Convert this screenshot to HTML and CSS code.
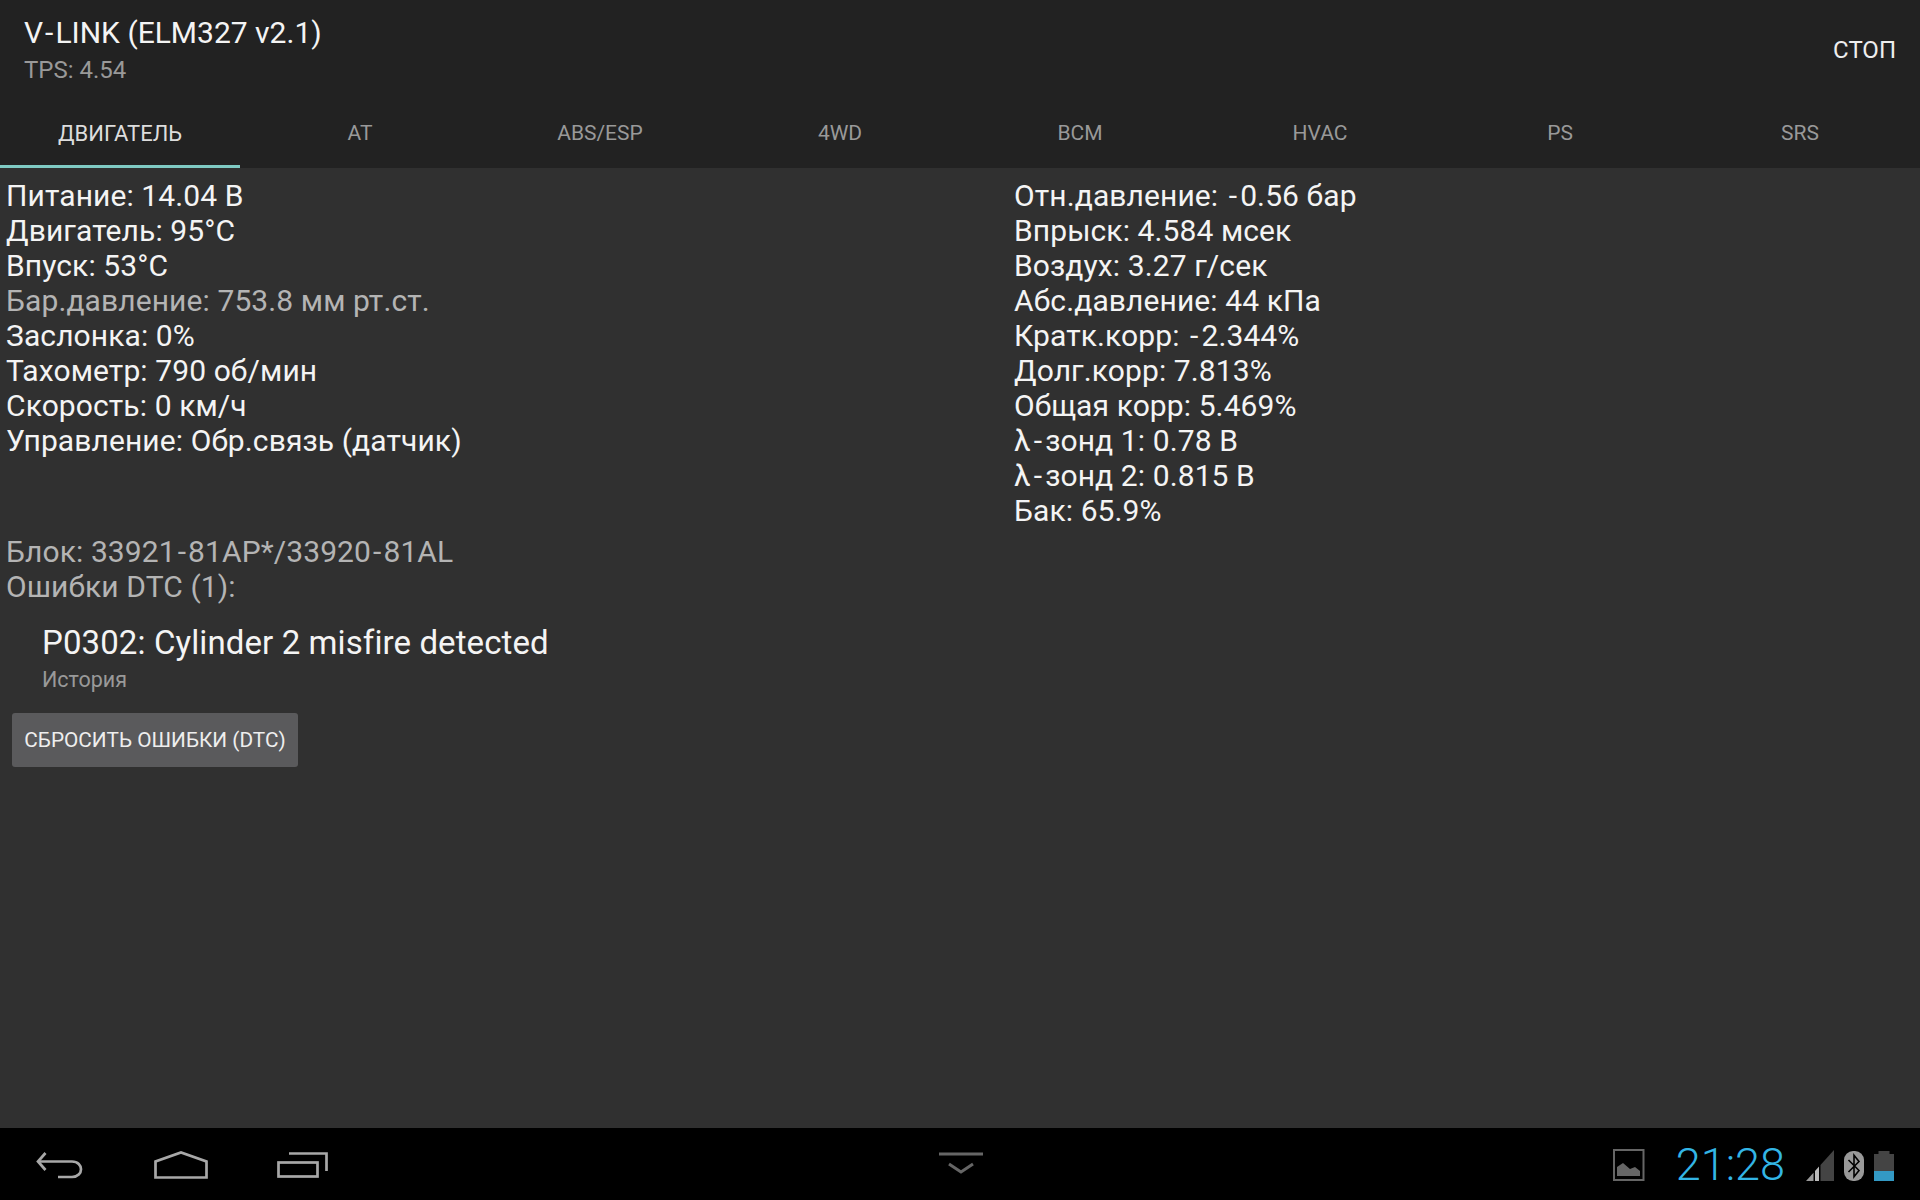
FILE: index.html
```html
<!DOCTYPE html>
<html lang="ru">
<head>
    <meta charset="UTF-8">
    <meta name="viewport" content="width=device-width, initial-scale=1.0">
    <title>V-LINK (ELM327 v2.1)</title>
    <link rel="stylesheet" href="styles.css">
</head>
<body>
    <div class="app">
        <header class="action-bar">
            <div class="titles">
                <div class="title">V<span class="hy">-</span>LINK (ELM327 v2.1)</div>
                <div class="subtitle">TPS: 4.54</div>
            </div>
            <div class="stop">СТОП</div>
        </header>

        <nav class="tabs">
            <div class="tab active">ДВИГАТЕЛЬ</div>
            <div class="tab">AT</div>
            <div class="tab">ABS/ESP</div>
            <div class="tab">4WD</div>
            <div class="tab">BCM</div>
            <div class="tab">HVAC</div>
            <div class="tab">PS</div>
            <div class="tab">SRS</div>
        </nav>

        <main class="content">
            <div class="columns">
                <div class="column">
                    <div>Питание: 14.04 В</div>
                    <div>Двигатель: 95°C</div>
                    <div>Впуск: 53°C</div>
                    <div class="dim">Бар.давление: 753.8 мм рт.ст.</div>
                    <div>Заслонка: 0%</div>
                    <div>Тахометр: 790 об/мин</div>
                    <div>Скорость: 0 км/ч</div>
                    <div>Управление: Обр.связь (датчик)</div>
                </div>
                <div class="column">
                    <div>Отн.давление: <span class="hy">-</span>0.56 бар</div>
                    <div>Впрыск: 4.584 мсек</div>
                    <div>Воздух: 3.27 г/сек</div>
                    <div>Абс.давление: 44 кПа</div>
                    <div>Кратк.корр: <span class="hy">-</span>2.344%</div>
                    <div>Долг.корр: 7.813%</div>
                    <div>Общая корр: 5.469%</div>
                    <div>λ<span class="hy">-</span>зонд 1: 0.78 В</div>
                    <div>λ<span class="hy">-</span>зонд 2: 0.815 В</div>
                    <div>Бак: 65.9%</div>
                </div>
            </div>

            <div class="block-info dim">
                <div>Блок: 33921<span class="hy">-</span>81AP*/33920<span class="hy">-</span>81AL</div>
                <div>Ошибки DTC (1):</div>
            </div>

            <div class="dtc">
                <div class="dtc-name">P0302: Cylinder 2 misfire detected</div>
                <div class="dtc-state">История</div>
            </div>

            <button class="reset">СБРОСИТЬ ОШИБКИ (DTC)</button>
        </main>

        <footer class="nav-bar">
            <div class="nav-buttons">
                <svg width="49" height="28" viewBox="0 0 49 28" fill="none" stroke="#a8a8a8" stroke-width="2.7">
                    <path d="M9.5 2 L2 10.5 L9.5 19"/>
                    <path d="M2 10.5 H36 C48 10.5 48 26 36 26 H22"/>
                </svg>
                <svg width="54" height="28" viewBox="0 0 54 28" fill="none" stroke="#a8a8a8" stroke-width="2.7">
                    <path d="M1.5 26.5 V10.5 L27 1.5 L52.5 10.5 V26.5 Z"/>
                </svg>
                <svg width="51" height="26" viewBox="0 0 51 26" fill="none" stroke="#a8a8a8" stroke-width="2.7">
                    <path d="M12 1.5 H49.5 V19"/>
                    <rect x="1.5" y="10.5" width="39" height="14"/>
                </svg>
            </div>
            <svg class="menu-icon" width="44" height="24" viewBox="0 0 44 24" fill="none" stroke="#666" stroke-width="3">
                <path d="M0 2 H44"/>
                <path d="M10 12 L22 20 L34 12"/>
            </svg>
            <div class="status">
                <svg class="picture-icon" width="32" height="32" viewBox="0 0 32 32">
                    <rect x="1" y="1" width="29.5" height="30" fill="none" stroke="#666" stroke-width="2"/>
                    <path d="M4 27 V18 L10 14 L17 20 L22 18 L27 22 V27 Z" fill="#666"/>
                </svg>
                <span class="clock">21:28</span>
                <div class="status-icons">
                    <svg width="28" height="31" viewBox="0 0 28 31">
                        <path d="M0 31 L7.5 22.7 V31 Z" fill="#999"/>
                        <path d="M9 21 L13 16.6 V31 H9 Z" fill="#bbb"/>
                        <path d="M14.5 15 L28 0 V31 H14.5 Z" fill="#444"/>
                    </svg>
                    <svg width="20" height="30" viewBox="0 0 20 30">
                        <rect width="20" height="30" rx="9" fill="#999"/>
                        <path d="M4.5 9 L15 19.5 L10 25.7 V4.3 L15 10.5 L4.5 21" fill="none" stroke="#000" stroke-width="1.6"/>
                    </svg>
                    <svg width="20" height="30" viewBox="0 0 20 30">
                        <path d="M4.5 0 H15.5 V3 H20 V30 H0 V3 H4.5 Z" fill="#444"/>
                        <rect y="20" width="20" height="10" fill="#3399c4"/>
                    </svg>
                </div>
            </div>
        </footer>
    </div>
</body>
</html>
```

FILE: styles.css
```css
/* базовая страница */
body {
    margin: 0;
    font-family: Roboto, 'Liberation Sans', sans-serif;
    background-color: #303030;
    color: #f4f4f4;
}

.app {
    display: flex;
    flex-direction: column;
    height: 1200px;
    overflow: hidden;
}

/* дефис в старом Roboto шире */
.hy {
    margin: 0 3px;
}

/* верхняя панель */
.action-bar {
    display: flex;
    justify-content: space-between;
    align-items: center;
    height: 96px;
    padding: 0 24px;
    box-sizing: border-box;
    background-color: #222;
}

.title {
    font-size: 30px;
    line-height: 35px;
    margin-top: 2px;
}

.title .hy {
    margin: 0 2px;
}

.subtitle {
    font-size: 24px;
    line-height: 28px;
    margin-top: 6px;
    color: #999;
}

.stop {
    font-size: 24px;
    margin-top: 3px;
    color: #eee;
}

/* вкладки */
.tabs {
    display: grid;
    grid-template-columns: repeat(8, 240px);
    height: 72px;
    background-color: #222;
}

.tab {
    display: flex;
    justify-content: center;
    align-items: center;
    box-sizing: border-box;
    height: 72px;
    padding-top: 2px;
    font-size: 21px;
    color: #999;
}

.tab.active {
    font-size: 22px;
    color: #ddd;
    border-bottom: 3px solid #7fcac3;
    padding-top: 5px;
}

/* основная часть */
.content {
    flex: 1;
    padding: 10px 0 0 6px;
    font-size: 30px;
    line-height: 35px;
    letter-spacing: 0.1px;
}

.columns {
    display: grid;
    grid-template-columns: 1008px 1fr;
}

.dim {
    color: #b4b4b4;
}

.block-info {
    margin-top: 6px;
}

.block-info .hy {
    margin: 0 2px;
}

.dtc {
    padding: 19px 0 0 36px;
}

.dtc-name {
    font-size: 33px;
    line-height: 39px;
}

.dtc-state {
    font-size: 21.5px;
    line-height: 25px;
    margin-top: 5px;
    letter-spacing: 0;
    color: #999;
}

.reset {
    display: block;
    width: 286px;
    height: 54px;
    margin: 21px 0 0 6px;
    padding: 0;
    font-family: inherit;
    font-size: 20.8px;
    color: #eee;
    background-color: #5a5a5c;
    border: none;
    border-radius: 3px;
}

/* нижняя панель */
.nav-bar {
    display: flex;
    justify-content: space-between;
    align-items: center;
    position: relative;
    height: 72px;
    padding: 2px 26px 0 36px;
    box-sizing: border-box;
    background-color: #000;
}

.nav-buttons {
    display: flex;
    align-items: center;
    gap: 69px;
}

.menu-icon {
    position: absolute;
    left: 939px;
    top: 24px;
}

.status {
    display: flex;
    align-items: center;
    gap: 29px;
}

.picture-icon {
    margin-right: 2px;
}

.clock {
    font-size: 45px;
    line-height: 48px;
    font-weight: 300;
    margin-right: -8px;
    color: #33b5e5;
}

.status-icons {
    display: flex;
    align-items: flex-end;
    gap: 10px;
}
```
